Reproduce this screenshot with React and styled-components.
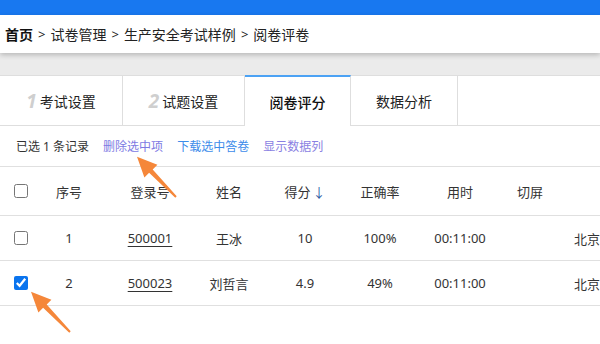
import React from 'react'
import styled, { createGlobalStyle } from 'styled-components'

const GlobalStyle = createGlobalStyle`
    body {
        margin: 0;
        background: #fff;
        font-family: "Noto Sans", "Noto Sans CJK SC", sans-serif;
        color: #333;
    }
`

const tabs = [
    { num: '1', label: '考试设置', width: 123 },
    { num: '2', label: '试题设置', width: 122 },
    { label: '阅卷评分', width: 106, active: true },
    { label: '数据分析', width: 107 },
]

const columns = [
    { key: 'check', width: 40 },
    { key: 'no', title: '序号', width: 58 },
    { key: 'login', title: '登录号', width: 104 },
    { key: 'name', title: '姓名', width: 54 },
    { key: 'score', title: '得分', width: 98, sort: true },
    { key: 'rate', title: '正确率', width: 52 },
    { key: 'time', title: '用时', width: 108 },
    { key: 'switch', title: '切屏', width: 32 },
    { key: 'city', title: '', width: 100, left: true },
]

const rows = [
    { no: 1, login: '500001', name: '王冰', score: '10', rate: '100%', time: '00:11:00', city: '北京', checked: false },
    { no: 2, login: '500023', name: '刘哲言', score: '4.9', rate: '49%', time: '00:11:00', city: '北京', checked: true },
]

const gridTemplate = columns.map(c => c.width + 'px').join(' ')

function Arrow({ x, y }) {
    // tail at (x, y), pointing up-left
    return (
        <polygon
            transform={`translate(${x} ${y})`}
            points="0.7,-0.7 -23.3,-27.6 -18.6,-32.2 -39,-40.2 -31.6,-19.6 -26.9,-24.2 -0.7,0.7"
            fill="#f5873a"
        />
    )
}

function App() {
    return (
        <Page>
            <GlobalStyle />
            <TopBar />
            <Breadcrumb>
                <Crumb $home>首页</Crumb>
                <Sep>&gt;</Sep>
                <Crumb>试卷管理</Crumb>
                <Sep>&gt;</Sep>
                <Crumb>生产安全考试样例</Crumb>
                <Sep>&gt;</Sep>
                <Crumb>阅卷评卷</Crumb>
            </Breadcrumb>
            <GrayBand />
            <TabBar>
                {tabs.map(t => (
                    <Tab key={t.label} $width={t.width} $active={t.active}>
                        {t.num && <TabNum>{t.num}</TabNum>}
                        {t.label}
                    </Tab>
                ))}
            </TabBar>
            <Toolbar>
                <span>已选 1 条记录</span>
                <ToolLink $color="#7d7ae3">删除选中项</ToolLink>
                <ToolLink $color="#3d8cea">下载选中答卷</ToolLink>
                <ToolLink $color="#8a7fe2">显示数据列</ToolLink>
            </Toolbar>
            <Table>
                <HeadRow>
                    {columns.map(c => (
                        <Cell key={c.key} $left={c.left}>
                            {c.key === 'check' ? <Check type="checkbox" readOnly /> : c.title}
                            {c.sort && <SortArrow>↓</SortArrow>}
                        </Cell>
                    ))}
                </HeadRow>
                {rows.map(r => (
                    <Row key={r.no}>
                        <Cell><Check type="checkbox" checked={r.checked} readOnly /></Cell>
                        <Cell>{r.no}</Cell>
                        <Cell><LoginLink>{r.login}</LoginLink></Cell>
                        <Cell>{r.name}</Cell>
                        <Cell>{r.score}</Cell>
                        <Cell>{r.rate}</Cell>
                        <Cell>{r.time}</Cell>
                        <Cell></Cell>
                        <Cell $left>{r.city}</Cell>
                    </Row>
                ))}
            </Table>
            <Overlay width="600" height="344" viewBox="0 0 600 344">
                <Arrow x={176} y={197} />
                <Arrow x={70} y={332} />
            </Overlay>
        </Page>
    )
}

export default App

const Page = styled.div`
    position: relative;
    width: 600px;
    height: 344px;
    overflow: hidden;
    background: #fff;
`

const TopBar = styled.div`
    height: 15px;
    background: #1878f0;
`

const Breadcrumb = styled.div`
    position: relative;
    z-index: 1;
    height: 38px;
    display: flex;
    align-items: center;
    padding-left: 5px;
    background: #fff;
    font-size: 14px;
    color: #222;
    box-shadow: 0 2px 5px rgba(0, 0, 0, 0.22);
`

const Crumb = styled.span`
    font-weight: ${p => (p.$home ? 700 : 400)};
    color: ${p => (p.$home ? '#111' : '#222')};
`

const Sep = styled.span`
    margin: 0 5px;
    font-size: 13px;
`

const GrayBand = styled.div`
    height: 22px;
    background: #ebebeb;
`

const TabBar = styled.div`
    display: flex;
    height: 51px;
    box-sizing: border-box;
    border-top: 1px solid #dedede;
    border-bottom: 1px solid #dedede;
    background: #fff;
`

const Tab = styled.div`
    width: ${p => p.$width}px;
    box-sizing: border-box;
    display: flex;
    align-items: center;
    justify-content: center;
    border-right: 1px solid #dedede;
    font-size: 14px;
    color: #222;
    background: #fff;
    ${p => p.$active && `
        margin-top: -1px;
        margin-bottom: -1px;
        border-top: 2px solid #4ca2f4;
        font-weight: 500;
        color: #111;
    `}
`

const TabNum = styled.span`
    font-size: 19px;
    font-style: italic;
    font-weight: 700;
    color: #cfcfcf;
    margin-right: 3px;
`

const Toolbar = styled.div`
    height: 40px;
    display: flex;
    align-items: center;
    gap: 14px;
    padding-left: 16px;
    font-size: 12px;
    color: #333;
`

const ToolLink = styled.span`
    color: ${p => p.$color};
    cursor: pointer;
`

const Table = styled.div`
    width: 700px;
    border-top: 1px solid #e0e0e0;
    font-size: 13px;
    color: #333;
`

const HeadRow = styled.div`
    display: grid;
    grid-template-columns: ${gridTemplate};
    height: 48px;
    border-bottom: 1px solid #e0e0e0;
`

const Row = styled(HeadRow)`
    height: 44px;
`

const Cell = styled.div`
    display: flex;
    align-items: center;
    justify-content: ${p => (p.$left ? 'flex-start' : 'center')};
    padding-left: ${p => (p.$left ? '28px' : '0')};
    white-space: nowrap;
`

const Check = styled.input`
    width: 14px;
    height: 14px;
    margin: 0 0 0 1px;
    accent-color: #0a74ee;
`

const SortArrow = styled.span`
    color: #2f5da6;
    margin-left: 2px;
`

const LoginLink = styled.span`
    text-decoration: underline;
    text-underline-offset: 3px;
    color: #333;
`

const Overlay = styled.svg`
    position: absolute;
    left: 0;
    top: 0;
    pointer-events: none;
`
